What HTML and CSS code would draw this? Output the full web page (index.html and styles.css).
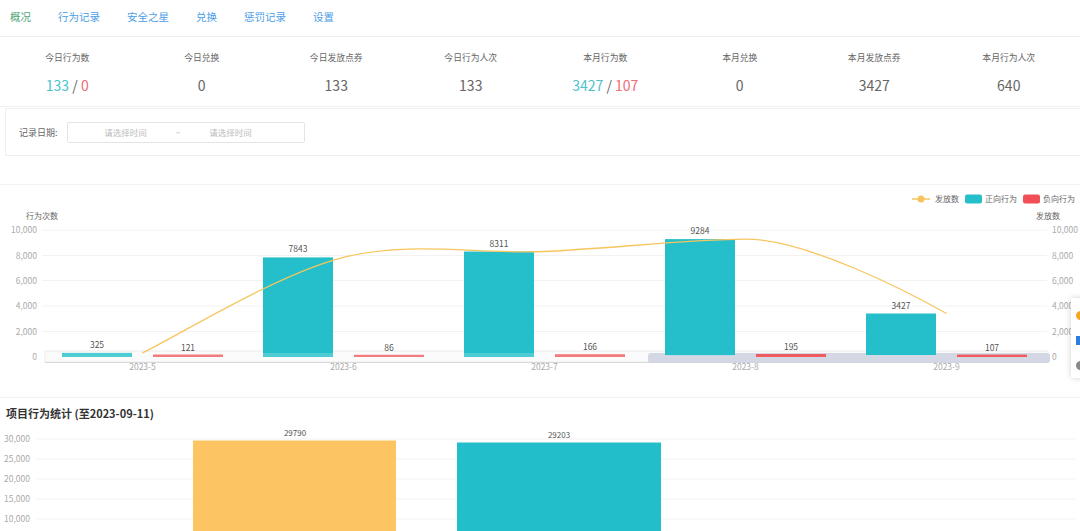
FILE: index.html
```html
<!DOCTYPE html>
<html lang="zh">
<head>
<meta charset="utf-8">
<title>概况</title>
<link rel="stylesheet" href="styles.css">
</head>
<body>
<div class="page">
  <nav class="tabs">
    <a class="tab active">概况</a>
    <a class="tab">行为记录</a>
    <a class="tab">安全之星</a>
    <a class="tab">兑换</a>
    <a class="tab">惩罚记录</a>
    <a class="tab">设置</a>
  </nav>

  <section class="stats">
    <div class="stat"><div class="stat-label">今日行为数</div><div class="stat-value"><span class="pos">133</span> / <span class="neg">0</span></div></div>
    <div class="stat"><div class="stat-label">今日兑换</div><div class="stat-value">0</div></div>
    <div class="stat"><div class="stat-label">今日发放点券</div><div class="stat-value">133</div></div>
    <div class="stat"><div class="stat-label">今日行为人次</div><div class="stat-value">133</div></div>
    <div class="stat"><div class="stat-label">本月行为数</div><div class="stat-value"><span class="pos">3427</span> / <span class="neg">107</span></div></div>
    <div class="stat"><div class="stat-label">本月兑换</div><div class="stat-value">0</div></div>
    <div class="stat"><div class="stat-label">本月发放点券</div><div class="stat-value">3427</div></div>
    <div class="stat"><div class="stat-label">本月行为人次</div><div class="stat-value">640</div></div>
  </section>

  <section class="filter">
    <span class="filter-label">记录日期:</span>
    <div class="range">
      <span class="ph">请选择时间</span>
      <span class="sep">~</span>
      <span class="ph">请选择时间</span>
    </div>
  </section>

  <section class="trend">
    <svg class="trend-chart" width="1080" height="200" viewBox="0 0 1080 200">
      <g class="legend">
        <line x1="912" y1="14" x2="930" y2="14" stroke="#f7c55e" stroke-width="1.5"/>
        <circle cx="921" cy="14" r="3.5" fill="#f7c55e"/>
        <text x="935" y="17">发放数</text>
        <rect x="965" y="9.5" width="17" height="9" rx="2" fill="#24bfca"/>
        <text x="985" y="17">正向行为</text>
        <rect x="1023" y="9.5" width="17" height="9" rx="2" fill="#ef4f55"/>
        <text x="1043" y="17">负向行为</text>
      </g>
      <g class="axis-title">
        <text x="26" y="34">行为次数</text>
        <text x="1036" y="34">发放数</text>
      </g>
      <g class="grid" stroke="#f2f2f2" stroke-width="1">
        <line x1="42" y1="45" x2="1047" y2="45"/>
        <line x1="42" y1="70.5" x2="1047" y2="70.5"/>
        <line x1="42" y1="95.5" x2="1047" y2="95.5"/>
        <line x1="42" y1="121" x2="1047" y2="121"/>
        <line x1="42" y1="146.5" x2="1047" y2="146.5"/>
      </g>
      <g class="ylab-left">
        <text x="37" y="48">10,000</text>
        <text x="37" y="73.5">8,000</text>
        <text x="37" y="99">6,000</text>
        <text x="37" y="124">4,000</text>
        <text x="37" y="149.5">2,000</text>
        <text x="37" y="175">0</text>
      </g>
      <g class="ylab-right">
        <text x="1052" y="48">10,000</text>
        <text x="1052" y="73.5">8,000</text>
        <text x="1052" y="99">6,000</text>
        <text x="1052" y="124">4,000</text>
        <text x="1052" y="149.5">2,000</text>
        <text x="1052" y="175">0</text>
      </g>
      <rect x="45" y="166" width="1003" height="11" fill="#fafafa" stroke="#ebebeb"/>
      <line x1="45" y1="177.5" x2="1048" y2="177.5" stroke="#d9d9d9"/>
      <rect x="648" y="168" width="402" height="10" rx="3" fill="#cfd4e2" opacity="0.9"/>
      <g class="bars-pos" fill="#24bfca">
        <rect x="62" y="167.9" width="70" height="4.1"/>
        <rect x="263" y="72.4" width="70" height="99.6"/>
        <rect x="464" y="66.5" width="70" height="105.5"/>
        <rect x="665" y="54.1" width="70" height="116"/>
        <rect x="866" y="128.5" width="70" height="41.5"/>
      </g>
      <g class="bars-neg" fill="#ef5b5f">
        <rect x="153" y="169.5" width="70" height="2.5"/>
        <rect x="354" y="169.8" width="70" height="2.2"/>
        <rect x="555" y="169.2" width="70" height="2.8"/>
        <rect x="756" y="169" width="70" height="3"/>
        <rect x="957" y="169.6" width="70" height="2.4"/>
      </g>
      <rect x="45" y="168" width="600" height="9" fill="#ffffff" opacity="0.2"/>
      <path d="M142.5 167.9 C176 152 276.5 89.3 343.5 72.4 C410.5 55.5 477.5 69.5 544.5 66.5 C611.5 63.5 690 54.1 745.5 54.1 C805 54.1 905 105 946.5 128.5" fill="none" stroke="#f7c55e" stroke-width="1.3"/>
      <g class="vlab">
        <text x="97" y="163">325</text>
        <text x="188" y="166">121</text>
        <text x="298" y="67">7843</text>
        <text x="389" y="166">86</text>
        <text x="499" y="61.5">8311</text>
        <text x="590" y="165">166</text>
        <text x="700" y="49">9284</text>
        <text x="791" y="165">195</text>
        <text x="901" y="123.5">3427</text>
        <text x="992" y="166">107</text>
      </g>
      <g class="xlab">
        <text x="142.5" y="185">2023-5</text>
        <text x="343.5" y="185">2023-6</text>
        <text x="544.5" y="185">2023-7</text>
        <text x="745.5" y="185">2023-8</text>
        <text x="946.5" y="185">2023-9</text>
      </g>
    </svg>
    <div class="toolbox">
      <span class="tool-dot orange"></span>
      <span class="tool-sq"></span>
      <span class="tool-dot gray"></span>
    </div>
  </section>

  <section class="project">
    <h3 class="project-title">项目行为统计 (至2023-09-11)</h3>
    <svg class="project-chart" width="1080" height="111" viewBox="0 0 1080 111">
      <g stroke="#f3f3f3" stroke-width="1">
        <line x1="36" y1="18" x2="1075" y2="18"/>
        <line x1="36" y1="38" x2="1075" y2="38"/>
        <line x1="36" y1="58" x2="1075" y2="58"/>
        <line x1="36" y1="78" x2="1075" y2="78"/>
        <line x1="36" y1="98" x2="1075" y2="98"/>
      </g>
      <g class="ylab-left">
        <text x="30" y="21">30,000</text>
        <text x="30" y="41">25,000</text>
        <text x="30" y="61">20,000</text>
        <text x="30" y="81">15,000</text>
        <text x="30" y="101">10,000</text>
      </g>
      <rect x="193" y="19.5" width="203" height="120" fill="#fdc561"/>
      <rect x="457" y="21.5" width="204" height="120" fill="#22bfca"/>
      <g class="vlab small">
        <text x="295" y="15">29790</text>
        <text x="559" y="17">29203</text>
      </g>
    </svg>
  </section>
</div>
</body>
</html>
```

FILE: styles.css
```css
* { box-sizing: border-box; }
html, body { margin: 0; padding: 0; background: #fff; }
body {
  font-family: "Noto Sans CJK SC", "Noto Sans", sans-serif;
  color: #666;
  width: 1080px;
  height: 531px;
  overflow: hidden;
}
.page { width: 1080px; }

.tabs {
  display: flex;
  align-items: center;
  gap: 27px;
  height: 37px;
  padding-left: 10px;
  border-bottom: 1px solid #efefef;
}
.tab {
  font-size: 10.5px;
  color: #4a9de6;
  line-height: 14px;
  margin-top: -3px;
}
.tab.active { color: #4fa577; }

.stats {
  display: grid;
  grid-template-columns: repeat(8, 134.5px);
  padding: 15px 0 11px;
  border-bottom: 1px solid #efefef;
}
.stat { text-align: center; }
.stat-label {
  font-size: 8.8px;
  line-height: 12px;
  color: #666;
}
.stat-value {
  margin-top: 11px;
  font-size: 14px;
  line-height: 20px;
  color: #666;
}
.pos { color: #4cc3cc; }
.neg { color: #f06b75; }

.filter {
  display: flex;
  align-items: center;
  margin: 1px 0 0 5px;
  height: 48px;
  padding-left: 13px;
  border: 1px solid #efefef;
  border-right: none;
}
.filter-label {
  font-size: 9px;
  color: #666;
  width: 48px;
}
.range {
  display: flex;
  align-items: center;
  width: 238px;
  height: 21px;
  padding-left: 10px;
  border: 1px solid #e4e4e4;
  border-radius: 2px;
}
.ph {
  width: 95px;
  text-align: center;
  font-size: 8.5px;
  color: #bbb;
}
.sep {
  width: 10px;
  text-align: center;
  font-size: 8.5px;
  color: #bbb;
}

.trend {
  position: relative;
  margin-top: 28px;
  height: 201px;
  border-top: 1px solid #f2f2f2;
}
.trend-chart { display: block; }
.trend-chart text, .project-chart text {
  font-family: "Noto Sans CJK SC", "Noto Sans", sans-serif;
}
.legend text { font-size: 8px; fill: #666; }
.axis-title text { font-size: 8px; fill: #666; }
.ylab-left text { font-size: 8.5px; fill: #aaa; text-anchor: end; }
.ylab-right text { font-size: 8.5px; fill: #aaa; }
.vlab text { font-size: 8.5px; fill: #555; text-anchor: middle; }
.vlab.small text { font-size: 8px; }
.xlab text { font-size: 8.5px; fill: #aaa; text-anchor: middle; }

.toolbox {
  position: absolute;
  left: 1071px;
  top: 113px;
  width: 30px;
  height: 80px;
  background: #fff;
  box-shadow: 0 0 6px rgba(0, 0, 0, 0.18);
  display: flex;
  flex-direction: column;
  align-items: flex-start;
  padding: 13px 0 0 5px;
  gap: 16px;
}
.tool-dot {
  width: 9px;
  height: 9px;
  border-radius: 50%;
}
.tool-dot.orange { background: #f5a623; }
.tool-dot.gray { background: #888; }
.tool-sq {
  width: 9px;
  height: 9px;
  background: #2f7de1;
}

.project {
  margin-top: 12px;
  border-top: 1px solid #f2f2f2;
}
.project-title {
  margin: 0;
  height: 23px;
  padding: 8px 0 0 6px;
  font-size: 11px;
  line-height: 14px;
  font-weight: bold;
  color: #333;
}
.project-chart { display: block; }
```
